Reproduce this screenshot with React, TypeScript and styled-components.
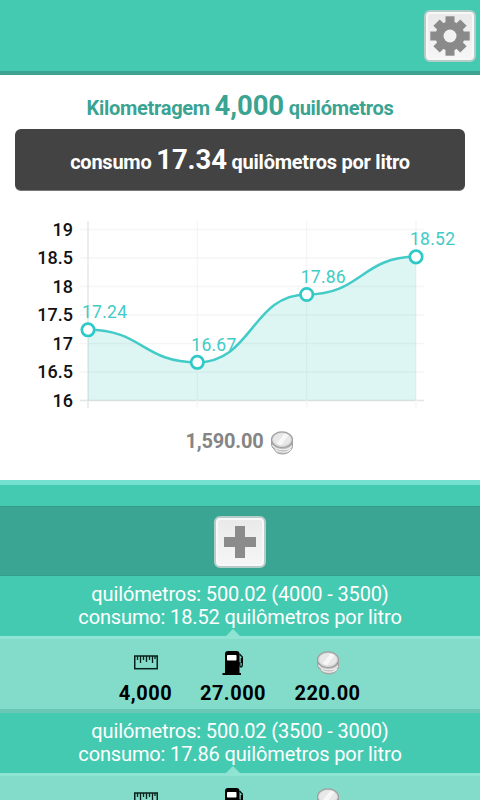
import React from "react";
import styled, { createGlobalStyle } from "styled-components";

const GlobalStyle = createGlobalStyle`
  * { box-sizing: border-box; }
  html, body { margin: 0; padding: 0; background: #82dcc9; overflow: hidden; }
  body { font-family: Roboto, "Liberation Sans", sans-serif; }
`;

const Screen = styled.main`
  width: 480px;
  height: 800px;
  overflow: hidden;
  display: flex;
  flex-direction: column;
  background: #82dcc9;
  & > * { flex-shrink: 0; }
`;

const TopBar = styled.header`
  height: 75px;
  padding: 10px 4px 0 0;
  display: flex;
  justify-content: flex-end;
  background: #45cab2;
  border-bottom: 4px solid #3ea391;
`;

const IconButton = styled.button`
  width: 52px;
  height: 52px;
  padding: 0;
  display: flex;
  align-items: center;
  justify-content: center;
  border: 2px solid #b4cdc8;
  border-radius: 6px;
  background: linear-gradient(#e9e9e9, #f6f6f6);
  box-shadow: inset 0 0 0 2px #f8f8f8;
`;

const Summary = styled.section`
  height: 405px;
  display: flex;
  flex-direction: column;
  background: #fff;
`;

const Mileage = styled.div`
  height: 54px;
  padding-top: 14px;
  text-align: center;
  white-space: nowrap;
  font-size: 20px;
  font-weight: 700;
  line-height: 34px;
  letter-spacing: -0.28px;
  color: #3aa391;
`;

const Big = styled.span`
  font-size: 27.5px;
  letter-spacing: -0.1px;
`;

const Consumption = styled.div`
  height: 62px;
  margin: 0 15px;
  border-radius: 6px;
  border-bottom: 1px solid #777;
  background: #434343;
  color: #fff;
  text-align: center;
  white-space: nowrap;
  font-size: 20px;
  font-weight: 700;
  line-height: 62px;
  letter-spacing: -0.24px;
`;

const ChartSvg = styled.svg`
  display: block;
  width: 480px;
  height: 229px;
`;

const Total = styled.div`
  height: 40px;
  display: flex;
  justify-content: center;
  gap: 7px;
  font-size: 20px;
  font-weight: 700;
  line-height: 42px;
  letter-spacing: -0.2px;
  color: #858585;
  svg { margin-top: 11px; }
`;

const Strip = styled.div`
  height: 26px;
  background: #45cab2;
  border-top: 5px solid #74e1cf;
`;

const AddBar = styled.div`
  height: 70px;
  padding-top: 1px;
  display: flex;
  align-items: center;
  justify-content: center;
  background: #3aa592;
  border-top: 1px solid #359b89;
  border-bottom: 1px solid #389e8c;
`;

const EntryHead = styled.div`
  height: 60px;
  padding-top: 7px;
  position: relative;
  background: #45cab2;
  color: #fff;
  font-size: 20px;
  line-height: 23px;
  letter-spacing: -0.14px;
  text-align: center;
  white-space: nowrap;
`;

const Pointer = styled.span`
  position: absolute;
  left: 226px;
  bottom: 0;
  border: 7px solid transparent;
  border-top-width: 0;
  border-bottom-color: #8ee3d2;
`;

const EntryBody = styled.div`
  height: 77px;
  padding-top: 12px;
  display: flex;
  justify-content: center;
  gap: 28px;
  background: #82dcc9;
  border-top: 3px solid #90e4d3;
  border-bottom: 4px solid #68c8b5;
  color: #000;
  font-size: 20px;
  font-weight: 700;
  letter-spacing: 0.5px;
`;

const Metric = styled.div<{ $width: number }>`
  width: ${(p) => p.$width}px;
  display: flex;
  flex-direction: column;
  align-items: center;
  line-height: 24px;
  white-space: nowrap;
  svg { margin-bottom: 6px; }
`;

const Gear = () => (
  <svg width="42" height="42" viewBox="-21 -21 42 42" fill="#8a8a8a">
    {[0, 45, 90, 135].map((a) => (
      <rect key={a} x="-4.5" y={a % 90 ? -19 : -19.7} width="9" height={a % 90 ? 38 : 39.4} transform={`rotate(${a})`} />
    ))}
    <circle r="14.5" />
    <circle r="6.5" fill="#f1f1f1" />
  </svg>
);

const Plus = () => (
  <svg width="32" height="32" viewBox="0 0 32 32">
    <path d="M11 0h10v11h11v10H21v11H11V21H0V11h11z" fill="#8b8b8b" />
  </svg>
);

const Coins = () => (
  <svg width="24" height="24" viewBox="0 0 24 24">
    <path d="M1.500 13c0 2 1 4 2.500 5 1.500 3.500 5 5 8.500 5 5 0 9-3 10-7v-6H1.500z" fill="#bababa" stroke="#a2a2a2" />
    <path d="M2.5 14c3 5.500 15 6.500 19.500 1M5 18.500c4 3.500 12 3.500 16-.5" fill="none" stroke="#ececec" strokeWidth="1.3" />
    <ellipse cx="12" cy="8.700" rx="10.5" ry="7.800" fill="#dadada" stroke="#a0a0a0" strokeWidth="1.2" />
    <ellipse cx="12" cy="8.4" rx="8.7" ry="6.2" fill="#e8e8e8" />
    <path d="M6.500 12.600L14.500 2.5l4 1.500L11 14.400z" fill="#fff" opacity=".65" />
  </svg>
);

const Ruler = () => (
  <svg width="24" height="24" viewBox="0 0 24 24" fill="none" stroke="#08201b">
    <rect x=".75" y="5" width="22.5" height="12.7" strokeWidth="1.5" />
    <path d="M3.5 5v4M6.5 5v7M9.5 5v4M12.5 5v6M15.5 5v4M18.5 5v7M21 5v3" strokeWidth="1.3" />
  </svg>
);

const Pump = () => (
  <svg width="24" height="24" viewBox="0 0 24 24">
    <path d="M4 3Q4 0 7 0h8.500q3 0 3 3v19H20v2H1.500v-2H4z" fill="#000" />
    <rect x="6" y="4" width="9.5" height="5.5" rx=".7" fill="#fff" />
    <path d="M18.500 3l2.800 3v8q0 2-1.300 2-1.200 0-1.200-2v-2H18" fill="none" stroke="#031713" strokeWidth="1.4" />
    <path d="M19.700 7h2v5h-2z" fill="#000" />
  </svg>
);

const gridX = [88, 197.3, 306.7, 416];
const values = [17.24, 16.67, 17.86, 18.52];
const ticks = [19, 18.5, 18, 17.5, 17, 16.5, 16];
const toY = (v: number) => 209.5 - (v - 16) * 57;

const curve = values.slice(1).reduce((d, v, i) => {
  const mid = (gridX[i] + gridX[i + 1]) / 2;
  return `${d} C${mid} ${toY(values[i])} ${mid} ${toY(v)} ${gridX[i + 1]} ${toY(v)}`;
}, `M${gridX[0]} ${toY(values[0])}`);

const Chart = () => (
  <ChartSvg viewBox="0 0 480 229" fontFamily="Roboto, sans-serif">
    {ticks.map((t) => (
      <g key={t}>
        <line x1="80" x2="424" y1={toY(t)} y2={toY(t)} stroke={t === 16 ? "#e4e4e4" : "#f5f5f5"} strokeWidth="1.3" />
        <text x="73" y={toY(t) + 6} textAnchor="end" fontSize="18" fontWeight="500" fill="#111">{t}</text>
      </g>
    ))}
    {gridX.map((x, i) => (
      <line key={x} x1={x} x2={x} y1="30" y2="217" stroke={i ? "#f5f5f5" : "#e4e4e4"} strokeWidth="1.3" />
    ))}
    <path d={`${curve} V209.5 H88 Z`} fill="#40cfc0" fillOpacity=".18" />
    <path d={curve} fill="none" stroke="#43cbc7" strokeWidth="2.5" />
    {values.map((v, i) => (
      <g key={v}>
        <circle cx={gridX[i]} cy={toY(v)} r="6.2" fill="#fff" stroke="#2fc9c7" strokeWidth="2.7" />
        <text x={gridX[i] - 6} y={toY(v) - 11.5} fontSize="17.5" fill="#41cbc5" textLength="45">{v}</text>
      </g>
    ))}
  </ChartSvg>
);

type Entry = { from: number; to: number; rate: string; km?: string; fuel?: string; cost?: string };

const entries: Entry[] = [
  { from: 3500, to: 4000, rate: "18.52", km: "4,000", fuel: "27.000", cost: "220.00" },
  { from: 3000, to: 3500, rate: "17.86" },
];

export default function App() {
  return (
    <Screen>
      <GlobalStyle />
      <TopBar>
        <IconButton aria-label="Configurações"><Gear /></IconButton>
      </TopBar>
      <Summary>
        <Mileage>Kilometragem <Big>4,000</Big> quilómetros</Mileage>
        <Consumption>consumo <Big>17.34</Big> quilômetros por litro</Consumption>
        <Chart />
        <Total>1,590.00 <Coins /></Total>
      </Summary>
      <Strip />
      <AddBar>
        <IconButton aria-label="Adicionar"><Plus /></IconButton>
      </AddBar>
      {entries.map((e) => (
        <React.Fragment key={e.to}>
          <EntryHead>
            <div>quilómetros: 500.02 ({e.to} - {e.from})</div>
            <div>consumo: {e.rate} quilômetros por litro</div>
            <Pointer />
          </EntryHead>
          <EntryBody>
            <Metric $width={53}><Ruler />{e.km}</Metric>
            <Metric $width={66}><Pump />{e.fuel}</Metric>
            <Metric $width={67}><Coins />{e.cost}</Metric>
          </EntryBody>
        </React.Fragment>
      ))}
    </Screen>
  );
}
